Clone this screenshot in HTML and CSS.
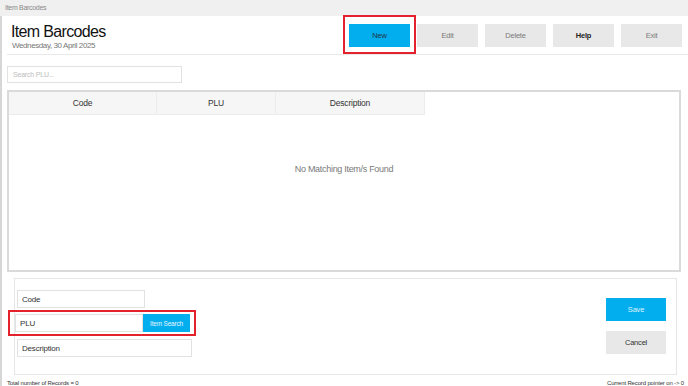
FILE: index.html
```html
<html>
  <head>
    <meta charset="utf-8">
    <link rel="stylesheet" href="styles.css">
    <title>Item Barcodes</title>
  </head>
  <body>
    <div class="titlebar">Item Barcodes</div>

    <div class="window">
      <div class="header">
        <div class="heading">
          <h1>Item Barcodes</h1>
          <div class="date">Wednesday, 30 April 2025</div>
        </div>
        <div class="toolbar">
          <div class="mark"><button class="btn blue">New</button></div>
          <button class="btn grey first">Edit</button>
          <button class="btn grey">Delete</button>
          <button class="btn grey strong">Help</button>
          <button class="btn grey">Exit</button>
        </div>
      </div>

      <input class="search" type="text" placeholder="Search PLU...">

      <div class="grid">
        <div class="gridHead">
          <div class="col c1">Code</div>
          <div class="col c2">PLU</div>
          <div class="col c3">Description</div>
        </div>
        <div class="empty">No Matching Item/s Found</div>
      </div>

      <div class="editor">
        <div class="fields">
          <input class="field code" type="text" placeholder="Code">
          <div class="markRow">
            <input class="field plu" type="text" placeholder="PLU">
            <button class="btn blue small">Item Search</button>
          </div>
          <input class="field desc" type="text" placeholder="Description">
        </div>
        <div class="actions">
          <button class="btn blue light">Save</button>
          <button class="btn grey dark">Cancel</button>
        </div>
      </div>

      <div class="status">
        <span>Total number of Records = 0</span>
        <span>Current Record pointer on -&gt; 0</span>
      </div>
    </div>
  </body>
</html>
```

FILE: styles.css
```css
body {
  margin: 0;
  font-family: 'Liberation Sans', Arial, sans-serif;
  background-color: #fff;
  width: 688px;
  height: 386px;
  overflow: hidden;
}

.titlebar {
  height: 16px;
  line-height: 16px;
  padding-left: 5px;
  background-color: #f0f0f0;
  color: #8a8a8a;
  font-size: 7px;
  letter-spacing: -0.3px;
}

.window {
  border-left: 2px solid #d6d6d6;
  height: 370px;
  padding-left: 5px;
}

/* header */
.header {
  display: flex;
  justify-content: space-between;
  height: 38px;
  border-bottom: 1px solid #e9e9e9;
}

.heading {
  padding-left: 4px;
  padding-top: 7px;
}

h1 {
  margin: 0;
  font-size: 16px;
  font-weight: normal;
  letter-spacing: -0.65px;
  line-height: 18px;
  color: #111;
}

.date {
  margin-left: 1px;
  font-size: 8px;
  letter-spacing: -0.4px;
  color: #777;
}

.toolbar {
  display: flex;
  align-items: flex-start;
  margin-top: -1px;
  padding-right: 6px;
}

.mark {
  border: 2px solid #e3222e;
  padding: 7px 4px 5px 4px;
}

.btn {
  border: 0;
  width: 61px;
  height: 23px;
  padding: 0;
  font-family: inherit;
  font-size: 7.5px;
  letter-spacing: -0.2px;
}

.toolbar .grey {
  margin-top: 9px;
  margin-left: 7px;
}

.toolbar .first {
  margin-left: 1px;
}

.blue {
  background-color: #03aeef;
  color: #1e3444;
}

.grey {
  background-color: #e8e8e8;
  color: #7a7a7a;
}

.strong {
  color: #222;
  font-weight: bold;
}

.light {
  color: #dff4ff;
}

.dark {
  color: #333;
}

/* search + grid */
.search {
  display: block;
  margin-top: 11px;
  width: 175px;
  height: 17px;
  border: 1px solid #e2e2e2;
  padding: 0 0 0 5px;
  font-family: inherit;
  font-size: 7px;
  letter-spacing: -0.2px;
  box-sizing: border-box;
}

.search::placeholder {
  color: #bdbdbd;
}

.grid {
  margin-top: 7px;
  width: 674px;
  height: 182px;
  border: 2px solid #dadada;
  box-sizing: border-box;
}

.gridHead {
  display: flex;
  height: 23px;
}

.col {
  background-color: #f6f6f6;
  border-right: 1px solid #ececec;
  border-bottom: 1px solid #ececec;
  text-align: center;
  line-height: 23px;
  font-size: 8.5px;
  letter-spacing: -0.2px;
  color: #333;
}

.c1 { width: 147px; }
.c2 { width: 118px; }
.c3 { width: 148px; }

.empty {
  padding-top: 49px;
  text-align: center;
  font-size: 9px;
  letter-spacing: -0.3px;
  color: #7a7a7a;
}

/* editor */
.editor {
  display: flex;
  justify-content: space-between;
  margin-top: 6px;
  margin-left: 7px;
  width: 663px;
  height: 97px;
  border: 1px solid #e6e6e6;
  box-sizing: border-box;
}

.fields {
  display: flex;
  flex-direction: column;
  align-items: flex-start;
  padding-top: 11px;
  padding-left: 2px;
}

.field {
  height: 18px;
  border: 1px solid #e2e2e2;
  padding: 0 0 0 4px;
  font-family: inherit;
  font-size: 8px;
  letter-spacing: -0.2px;
  box-sizing: border-box;
}

.field::placeholder {
  color: #333;
}

.code { width: 128px; }
.plu { width: 128px; }
.desc { width: 175px; margin-top: 3px; }

.markRow {
  display: flex;
  margin-top: 2px;
  margin-left: -9px;
  border: 2px solid #e3222e;
  padding: 2px 4px 2px 5px;
}

.small {
  width: 47px;
  height: 18px;
  font-size: 6.5px;
  color: #e6f6ff;
}

.actions {
  display: flex;
  flex-direction: column;
  gap: 10px;
  padding-top: 19px;
  padding-right: 10px;
}

.actions .btn {
  width: 60px;
}

/* footer */
.status {
  display: flex;
  justify-content: space-between;
  padding-top: 5px;
  padding-right: 4px;
  font-size: 6px;
  letter-spacing: -0.15px;
  color: #333;
}
```
